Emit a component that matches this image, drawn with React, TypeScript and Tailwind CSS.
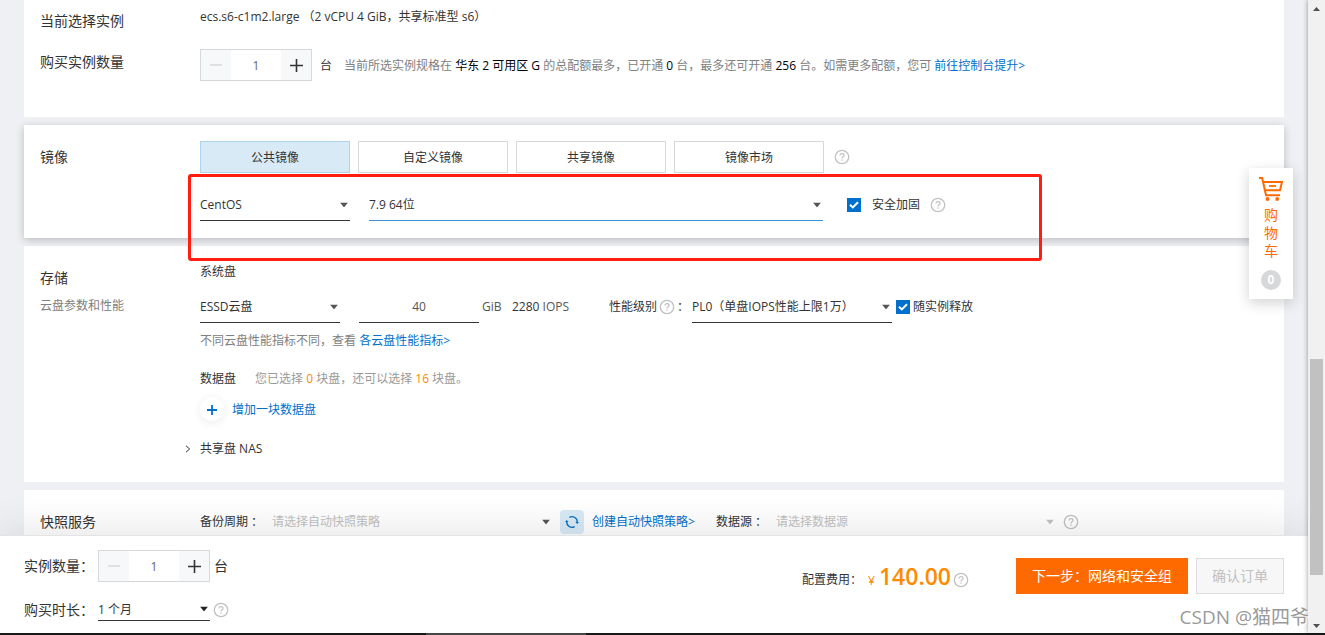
import { useState } from 'react';
import type { ReactNode } from 'react';
import clsx from 'clsx';

const HelpIcon = ({ className }: { className?: string }) => (
  <svg
    viewBox="0 0 16 16"
    className={clsx('size-4 shrink-0 text-[#c1c1c1]', className)}
    fill="none"
    stroke="currentColor"
  >
    <circle cx="8" cy="8" r="6.7" strokeWidth="1.3" />
    <path
      d="M6 6.6C6 5.3 6.8 4.6 8 4.6s2 .7 2 1.8c0 1.4-2 1.5-2 3"
      strokeWidth="1.2"
    />
    <path d="M8 10.4v1.3" strokeWidth="1.3" />
  </svg>
);

const CartIcon = () => (
  <svg viewBox="0 0 24 24" className="size-6" fill="none" stroke="#ff6a00">
    <path d="M0 1h3.2L7 18.2h14" strokeWidth="2" />
    <path d="M3.8 5H23l-2 8.2H5.8" strokeWidth="2" />
    <path d="M10 9h7" strokeWidth="1.8" />
    <circle cx="8.5" cy="22" r="1.9" fill="#ff6a00" stroke="none" />
    <circle cx="18.2" cy="22" r="1.9" fill="#ff6a00" stroke="none" />
  </svg>
);

const RefreshIcon = () => (
  <svg viewBox="0 0 14 14" className="size-3.5" fill="none" stroke="#0070cc">
    <path d="M4.4 2.4A5.2 5.2 0 0 1 12.2 7.4" strokeWidth="1.3" />
    <path d="M9.6 11.6A5.2 5.2 0 0 1 1.8 6.6" strokeWidth="1.3" />
    <path d="M10.4 6.9H14l-1.8 2zM0 7.1h3.6L1.8 5.1z" fill="#0070cc" stroke="none" />
  </svg>
);

type SelectProps = {
  label: string;
  value: string;
  className?: string;
  textClass?: string;
  arrowClass?: string;
};

const Select = ({
  label,
  value,
  className,
  textClass = 'text-[#333]',
  arrowClass = 'text-[#555]',
}: SelectProps) => (
  <div className={clsx('relative shrink-0 border-b', className)}>
    <select
      aria-label={label}
      className={clsx(
        'block h-full w-full appearance-none bg-transparent pt-px pr-5 text-xs outline-none',
        textClass
      )}
    >
      <option>{value}</option>
    </select>
    <svg
      viewBox="0 0 8 5"
      className={clsx(
        'pointer-events-none absolute top-1/2 right-0.5 h-[5px] w-2 -translate-y-1/2',
        arrowClass
      )}
      fill="currentColor"
    >
      <path d="M0 0h8L4 5z" />
    </svg>
  </div>
);

const Stepper = ({ label }: { label: string }) => {
  const [count, setCount] = useState(1);

  return (
    <div className="flex h-8 w-28 shrink-0 border border-[#d7d8d9] bg-white">
      <button
        type="button"
        aria-label="减少"
        disabled={count <= 1}
        onClick={() => setCount(count - 1)}
        className="flex w-[30px] items-center justify-center bg-[#f7f8fa] text-[#333] disabled:text-[#d7d8d9]"
      >
        <svg viewBox="0 0 12 12" className="size-3" stroke="currentColor">
          <path d="M0 6h12" strokeWidth="1.5" />
        </svg>
      </button>
      <input
        aria-label={label}
        value={count}
        onChange={(e) => setCount(Number(e.target.value) || 1)}
        className="w-[50px] pt-px text-center text-xs text-[#666] outline-none"
      />
      <button
        type="button"
        aria-label="增加"
        onClick={() => setCount(count + 1)}
        className="flex w-[30px] items-center justify-center bg-[#f7f8fa] text-[#333]"
      >
        <svg viewBox="0 0 14 14" className="size-3.5" stroke="currentColor">
          <path d="M1 7.5h13M7.5 1v13" strokeWidth="1.6" />
        </svg>
      </button>
    </div>
  );
};

const Checkbox = ({ label, className }: { label: string; className: string }) => (
  <label className={clsx('flex shrink-0 items-center text-[#333]', className)}>
    <span className="grid size-3.5 place-items-center">
      <input
        type="checkbox"
        defaultChecked
        className="peer col-start-1 row-start-1 size-3.5 appearance-none border border-[#d7d8d9] checked:border-[#0070cc] checked:bg-[#0070cc]"
      />
      <svg
        viewBox="0 0 10 8"
        className="pointer-events-none invisible col-start-1 row-start-1 h-2 w-2.5 peer-checked:visible"
        fill="none"
        stroke="#fff"
        strokeWidth="2"
      >
        <path d="M1 3.8l2.8 2.6L9 1.2" />
      </svg>
    </span>
    {label}
  </label>
);

type PanelProps = {
  title: string;
  sub?: string;
  className?: string;
  children: ReactNode;
};

const Panel = ({ title, sub, className, children }: PanelProps) => (
  <section className={clsx('flex bg-white px-4 pt-4', className)}>
    <div className="w-40 shrink-0 pt-1.5">
      <h2 className="text-sm leading-5 text-[#333]">{title}</h2>
      {sub && <p className="mt-2 leading-5 text-[#808080]">{sub}</p>}
    </div>
    <div className="min-w-0 flex-1">{children}</div>
  </section>
);

const imageTabs = ['公共镜像', '自定义镜像', '共享镜像', '镜像市场'];

const InstancePanel = () => (
  <section className="bg-white px-4 pt-[7px] pb-9">
    <div className="flex h-[42px]">
      <h2 className="w-40 shrink-0 pt-1 text-sm leading-5">当前选择实例</h2>
      <p>ecs.s6-c1m2.large （2 vCPU 4 GiB，共享标准型 s6）</p>
    </div>
    <div className="flex">
      <h2 className="w-40 shrink-0 pt-[3px] text-sm leading-5">购买实例数量</h2>
      <div className="flex items-center whitespace-nowrap">
        <Stepper label="购买实例数量" />
        <span className="ml-2 pt-0.5">台</span>
        <p className="ml-3 pt-0.5 text-[#808080]">
          当前所选实例规格在 <span className="text-black">华东 2 可用区 G</span>{' '}
          的总配额最多，已开通 <span className="text-black">0</span> 台，最多还可开通{' '}
          <span className="text-black">256</span> 台。如需更多配额，您可{' '}
          <a href="#quota" className="text-[#0070cc]">
            前往控制台提升&gt;
          </a>
        </p>
      </div>
    </div>
  </section>
);

const ImagePanel = () => {
  const [active, setActive] = useState(imageTabs[0]);

  return (
    <Panel
      title="镜像"
      className="relative z-[1] pb-[17px] shadow-[0_2px_8px_rgba(0,0,0,0.22)]"
    >
      <div className="flex items-center gap-2">
        {imageTabs.map((tab) => (
          <button
            key={tab}
            type="button"
            onClick={() => setActive(tab)}
            className={clsx(
              'h-8 w-[150px] border pt-0.5 text-[#333]',
              tab === active
                ? 'border-[#aed3ef] bg-[#d9eaf7]'
                : 'border-[#d7d8d9] bg-white'
            )}
          >
            {tab}
          </button>
        ))}
        <HelpIcon className="ml-0.5" />
      </div>
      <div className="mt-4 flex items-center">
        <Select label="操作系统" value="CentOS" className="h-8 w-[150px] border-[#333]" />
        <Select
          label="系统版本"
          value="7.9 64位"
          className="ml-[19px] h-8 w-[454px] border-[#3b8fd9]"
        />
        <Checkbox label="安全加固" className="ml-6 gap-[11px]" />
        <HelpIcon className="ml-2.5" />
      </div>
      <div className="pointer-events-none absolute top-[49px] left-[164px] h-[87px] w-[854px] rounded-[3px] border-3 border-[#ff1e0f]" />
    </Panel>
  );
};

const StoragePanel = () => (
  <Panel title="存储" sub="云盘参数和性能" className="pb-[23px] whitespace-nowrap">
    <h3>系统盘</h3>
    <div className="mt-[9px] flex items-center">
      <Select label="云盘类型" value="ESSD云盘" className="h-8 w-[140px] border-[#333]" />
      <input
        aria-label="系统盘容量"
        defaultValue="40"
        className="ml-[19px] h-8 w-[120px] border-b border-[#333] text-center text-[#555] outline-none"
      />
      <span className="ml-[3px] w-[30px] text-[#555]">GiB</span>
      <span className="w-[97px] text-[#555]">
        <span className="text-[#333]">2280</span> IOPS
      </span>
      <span>性能级别</span>
      <HelpIcon className="ml-0.5" />
      <span className="w-[17px] pl-0.5">：</span>
      <Select
        label="性能级别"
        value="PL0（单盘IOPS性能上限1万）"
        className="h-8 w-[200px] border-[#333]"
      />
      <Checkbox label="随实例释放" className="ml-1 gap-[3px]" />
    </div>
    <p className="mt-2 text-[#808080]">
      不同云盘性能指标不同，查看{' '}
      <a href="#disk" className="text-[#0070cc]">
        各云盘性能指标&gt;
      </a>
    </p>
    <div className="mt-[18px] flex gap-[19px]">
      <h3>数据盘</h3>
      <p className="text-[#999]">
        您已选择 <span className="text-[#ff8a00]">0</span> 块盘，还可以选择{' '}
        <span className="text-[#ff8a00]">16</span> 块盘。
      </p>
    </div>
    <button type="button" className="mt-2 flex h-6 items-center gap-2 text-[#0070cc]">
      <span className="flex size-6 items-center justify-center rounded-full bg-white shadow-[0_2px_10px_rgba(0,0,0,0.08)]">
        <svg viewBox="0 0 12 12" className="mt-0.5 size-3" stroke="currentColor">
          <path d="M1 6h10M6 1v10" strokeWidth="1.8" />
        </svg>
      </span>
      <span className="pt-0.5">增加一块数据盘</span>
    </button>
    <button type="button" className="mt-[18px] -ml-4 flex h-5 items-center">
      <svg viewBox="0 0 8 8" className="mr-2 size-2" fill="none" stroke="#333">
        <path d="M2 .8L5.6 4 2 7.2" />
      </svg>
      共享盘 NAS
    </button>
  </Panel>
);

const SnapshotPanel = () => (
  <Panel title="快照服务">
    <div className="flex items-center whitespace-nowrap">
      <span className="w-[72px]">备份周期 ：</span>
      <Select
        label="备份周期"
        value="请选择自动快照策略"
        className="h-8 w-[280px] border-[#d7d8d9]"
        textClass="text-[#c1c1c1]"
      />
      <button
        type="button"
        aria-label="刷新"
        className="ml-2 flex size-6 items-center justify-center rounded-sm bg-[#d9eaf7]"
      >
        <RefreshIcon />
      </button>
      <a href="#snapshot" className="ml-2 w-[124px] text-[#0070cc]">
        创建自动快照策略&gt;
      </a>
      <span className="w-[60px]">数据源 ：</span>
      <Select
        label="数据源"
        value="请选择数据源"
        className="h-8 w-[280px] border-[#d7d8d9]"
        textClass="text-[#c1c1c1]"
        arrowClass="text-[#c1c1c1]"
      />
      <HelpIcon className="ml-[7px]" />
    </div>
  </Panel>
);

const OrderBar = () => (
  <footer className="relative z-10 flex h-[98px] shrink-0 items-start justify-between border-t border-[#e3e4e6] bg-white px-6 whitespace-nowrap shadow-[0_-4px_40px_rgba(0,0,0,0.11)]">
    <div className="pt-3.5 text-sm">
      <div className="flex items-center">
        <span className="w-[74px]">实例数量：</span>
        <Stepper label="实例数量" />
        <span className="ml-1">台</span>
      </div>
      <div className="mt-4 flex items-center">
        <span className="w-[74px]">购买时长：</span>
        <Select
          label="购买时长"
          value="1 个月"
          className="h-[23px] w-28 border-[#333]"
          arrowClass="text-[#222]"
        />
        <HelpIcon className="ml-[3px]" />
      </div>
    </div>
    <div className="flex items-center pt-[22px]">
      <span className="pt-2">配置费用：</span>
      <span className="flex items-baseline text-[#ff8a00]">
        <span className="mr-1 ml-1.5">¥</span>
        <span className="text-[23px] leading-8 font-semibold">140.00</span>
      </span>
      <HelpIcon className="mt-2 mr-[47px] ml-0.5" />
      <button type="button" className="h-9 w-[172px] bg-[#ff6a00] text-sm text-white">
        下一步：网络和安全组
      </button>
      <button
        type="button"
        disabled
        className="ml-2 h-9 w-[88px] border border-[#dedede] bg-[#f7f7f7] text-sm text-[#c1c1c1]"
      >
        确认订单
      </button>
    </div>
  </footer>
);

const CartWidget = () => (
  <button
    type="button"
    className="absolute top-[168px] right-[15px] z-[5] flex w-11 flex-col items-center bg-white pt-[9px] pb-[9px] text-sm leading-[18px] text-[#ff6a00] shadow-[0_4px_14px_rgba(0,0,0,0.18)]"
  >
    <CartIcon />
    <span className="mt-[5px] w-3.5 whitespace-normal">购物车</span>
    <span className="mt-2.5 size-5 rounded-full bg-[#d7d8d9] text-center text-xs leading-5 font-bold text-white">
      0
    </span>
  </button>
);

const ScrollRail = () => (
  <div className="relative z-20 flex w-[17px] shrink-0 flex-col items-center bg-[#f1f1f1] shadow-[0_0_5px_rgba(0,0,0,0.4)]">
    <svg viewBox="0 0 7 4" className="mt-[7px] h-1 w-[7px]" fill="#505050">
      <path d="M0 4h7L3.5 0z" />
    </svg>
    <div className="grow-[348]" />
    <div className="w-[13px] grow-[216] bg-[#c1c1c1]" />
    <div className="grow-[49]" />
    <svg viewBox="0 0 7 4" className="mb-[5px] h-1 w-[7px]" fill="#505050">
      <path d="M0 0h7L3.5 4z" />
    </svg>
  </div>
);

export default function App() {
  return (
    <div className="relative flex h-screen flex-col overflow-hidden bg-[#eff0f4] font-['Open_Sans','Noto_Sans_CJK_SC',sans-serif] text-xs leading-5 text-[#333]">
      <div className="flex min-h-0 flex-1">
        <div className="relative flex min-w-0 flex-1 flex-col">
          <main className="flex min-h-0 flex-1 flex-col gap-2 overflow-hidden px-6 *:shrink-0">
            <InstancePanel />
            <ImagePanel />
            <StoragePanel />
            <SnapshotPanel />
          </main>
          <CartWidget />
          <OrderBar />
        </div>
        <ScrollRail />
      </div>
      <div className="flex h-0.5 shrink-0 bg-[#1b1b1b]">
        <div className="ml-[426px] w-40 bg-[#4a4a4a]" />
      </div>
      <span className="pointer-events-none absolute right-4 bottom-1 z-30 text-[19px] leading-7 text-[#999] [text-shadow:1px_1px_0_#fff]">
        CSDN @猫四爷
      </span>
    </div>
  );
}
